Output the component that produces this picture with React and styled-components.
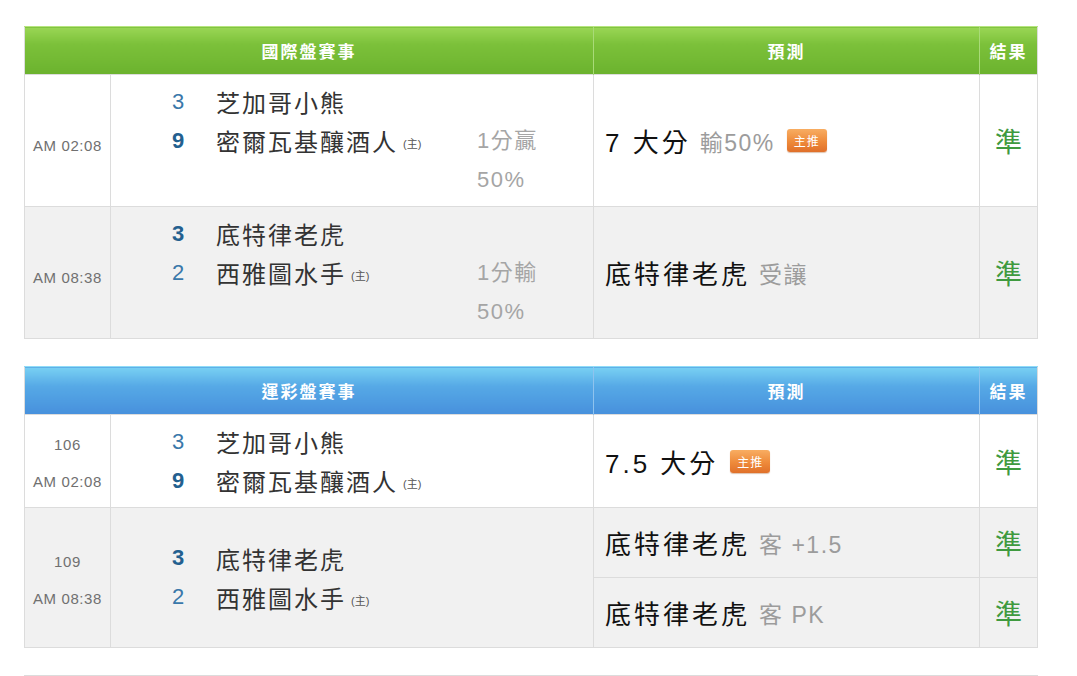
import React from 'react';
import styled, { createGlobalStyle, css } from 'styled-components';

const GlobalStyle = createGlobalStyle`
  html, body {
    margin: 0;
    padding: 0;
    background: #ffffff;
    font-family: "Liberation Sans", "Noto Sans CJK TC", sans-serif;
  }
`;

const Page = styled.div`
  padding: 26px 40px 0 24px;
  display: flex;
  flex-direction: column;
  gap: 27px;
`;

const themes = {
  green: {
    bg: 'linear-gradient(to bottom, #9ad655 0%, #7cc13a 35%, #6bb22e 100%)',
    line: '#a9da78',
    top: '#b6e57e',
  },
  blue: {
    bg: 'linear-gradient(to bottom, #78d0f3 0%, #56a9e6 40%, #4790dc 100%)',
    line: '#8fc3ee',
    top: '#8fdcf7',
  },
};

const Table = styled.table`
  width: 1013px;
  border-collapse: collapse;
  table-layout: fixed;
  border: 1px solid #dcdcdc;
`;

const HeadCell = styled.th`
  height: 47px;
  padding: 0;
  background: ${({ $theme }) => themes[$theme].bg};
  border-top: 1px solid ${({ $theme }) => themes[$theme].top};
  border-left: 1px solid ${({ $theme }) => themes[$theme].line};
  color: #fff;
  font-size: 17px;
  font-weight: bold;
  letter-spacing: 2px;
  text-align: center;
  vertical-align: middle;
  &:first-child {
    border-left: none;
  }
`;

const Row = styled.tr`
  background: ${({ $alt }) => ($alt ? '#f1f1f1' : '#ffffff')};
`;

const Cell = styled.td`
  padding: 0;
  border: 1px solid #dcdcdc;
  vertical-align: middle;
`;

const TimeCell = styled(Cell)`
  text-align: center;
  color: #707070;
  font-size: 15px;
  letter-spacing: 0.6px;
  line-height: 37px;
  padding-top: ${({ $single }) => ($single ? '10px' : '4px')};
`;

const MatchCell = styled(Cell)`
  padding: 7px 0 7px 49px;
`;

const MatchGrid = styled.div`
  display: grid;
  grid-template-columns: 36px 281px 1fr;
  grid-auto-rows: 39px;
  align-items: center;
`;

const Score = styled.span`
  grid-column: 1;
  text-align: center;
  font-size: 22px;
  color: ${({ $win }) => ($win ? '#23608f' : '#3a78aa')};
  font-weight: ${({ $win }) => ($win ? 'bold' : 'normal')};
`;

const Team = styled.span`
  grid-column: 2;
  padding-left: 20px;
  font-size: 24px;
  letter-spacing: 2px;
  color: #333;
  white-space: nowrap;
`;

const Home = styled.small`
  font-size: 11px;
  letter-spacing: 0;
  color: #555;
  margin-left: 5px;
  vertical-align: 3px;
`;

const Handicap = styled.div`
  grid-column: 3;
  grid-row: 2 / span 2;
  align-self: start;
  font-size: 22px;
  letter-spacing: 1.5px;
  line-height: 39px;
  color: #a5a5a5;
`;

const PickCell = styled(Cell)`
  padding: 0 0 0 11px;
  ${({ $split }) =>
    $split &&
    css`
      height: 69px;
    `}
`;

const Pick = styled.div`
  display: flex;
  align-items: center;
  gap: 9px;
  white-space: nowrap;
`;

const PickMain = styled.span`
  font-size: 26px;
  letter-spacing: 3px;
  color: #111;
`;

const PickNote = styled.span`
  font-size: 23px;
  letter-spacing: 1.5px;
  color: #9c9c9c;
`;

const Badge = styled.span`
  display: inline-flex;
  align-items: center;
  justify-content: center;
  width: 40px;
  height: 23px;
  margin-left: 3px;
  border-radius: 3px;
  background: linear-gradient(to bottom, #f8ad62 0%, #ee8a3a 55%, #e0702a 100%);
  box-shadow: 0 1px 1px rgba(160, 80, 20, 0.35);
  color: #fff;
  font-size: 12px;
  letter-spacing: 1px;
`;

const ResultCell = styled(Cell)`
  text-align: center;
  font-size: 27px;
  color: #3f9a3f;
`;

const NextTable = styled.div`
  height: 40px;
  border-top: 1px solid #dcdcdc;
  border-left: 1px solid #dcdcdc;
  width: 1013px;
`;

const intlRows = [
  {
    time: ['AM 02:08'],
    teams: [
      { score: 3, name: '芝加哥小熊' },
      { score: 9, name: '密爾瓦基釀酒人', home: true, win: true },
    ],
    handicap: ['1分贏', '50%'],
    picks: [{ main: '7 大分', note: '輸50%', hot: true }],
  },
  {
    time: ['AM 08:38'],
    teams: [
      { score: 3, name: '底特律老虎', win: true },
      { score: 2, name: '西雅圖水手', home: true },
    ],
    handicap: ['1分輸', '50%'],
    picks: [{ main: '底特律老虎', note: '受讓' }],
  },
];

const lotteryRows = [
  {
    time: ['106', 'AM 02:08'],
    teams: [
      { score: 3, name: '芝加哥小熊' },
      { score: 9, name: '密爾瓦基釀酒人', home: true, win: true },
    ],
    picks: [{ main: '7.5 大分', hot: true }],
  },
  {
    time: ['109', 'AM 08:38'],
    teams: [
      { score: 3, name: '底特律老虎', win: true },
      { score: 2, name: '西雅圖水手', home: true },
    ],
    picks: [
      { main: '底特律老虎', note: '客 +1.5' },
      { main: '底特律老虎', note: '客 PK' },
    ],
  },
];

const PickContent = ({ pick }) => (
  <Pick>
    <PickMain>{pick.main}</PickMain>
    {pick.note && <PickNote>{pick.note}</PickNote>}
    {pick.hot && <Badge>主推</Badge>}
  </Pick>
);

const Match = ({ teams, handicap }) => (
  <MatchGrid>
    {teams.map((t, i) => (
      <React.Fragment key={t.name}>
        <Score $win={t.win} style={{ gridRow: i + 1 }}>{t.score}</Score>
        <Team style={{ gridRow: i + 1 }}>
          {t.name}
          {t.home && <Home>(主)</Home>}
        </Team>
      </React.Fragment>
    ))}
    {handicap && (
      <Handicap>
        {handicap.map(h => (
          <div key={h}>{h}</div>
        ))}
      </Handicap>
    )}
  </MatchGrid>
);

const GameTable = ({ title, theme, rows }) => (
  <Table>
    <colgroup>
      <col style={{ width: 86 }} />
      <col style={{ width: 483 }} />
      <col style={{ width: 386 }} />
      <col style={{ width: 58 }} />
    </colgroup>
    <thead>
      <tr>
        <HeadCell $theme={theme} colSpan={2}>{title}</HeadCell>
        <HeadCell $theme={theme}>預測</HeadCell>
        <HeadCell $theme={theme}>結果</HeadCell>
      </tr>
    </thead>
    <tbody>
      {rows.map((row, idx) => {
        const span = row.picks.length;
        const split = span > 1;
        return (
          <React.Fragment key={idx}>
            <Row $alt={idx % 2 === 1}>
              <TimeCell rowSpan={span} $single={row.time.length === 1}>
                {row.time.map(t => (
                  <div key={t}>{t}</div>
                ))}
              </TimeCell>
              <MatchCell rowSpan={span}>
                <Match teams={row.teams} handicap={row.handicap} />
              </MatchCell>
              <PickCell $split={split}>
                <PickContent pick={row.picks[0]} />
              </PickCell>
              <ResultCell>準</ResultCell>
            </Row>
            {row.picks.slice(1).map((p, j) => (
              <Row $alt={idx % 2 === 1} key={j}>
                <PickCell $split={split}>
                  <PickContent pick={p} />
                </PickCell>
                <ResultCell>準</ResultCell>
              </Row>
            ))}
          </React.Fragment>
        );
      })}
    </tbody>
  </Table>
);

const App = () => (
  <>
    <GlobalStyle />
    <Page>
      <GameTable title="國際盤賽事" theme="green" rows={intlRows} />
      <GameTable title="運彩盤賽事" theme="blue" rows={lotteryRows} />
      <NextTable />
    </Page>
  </>
);

export default App;
